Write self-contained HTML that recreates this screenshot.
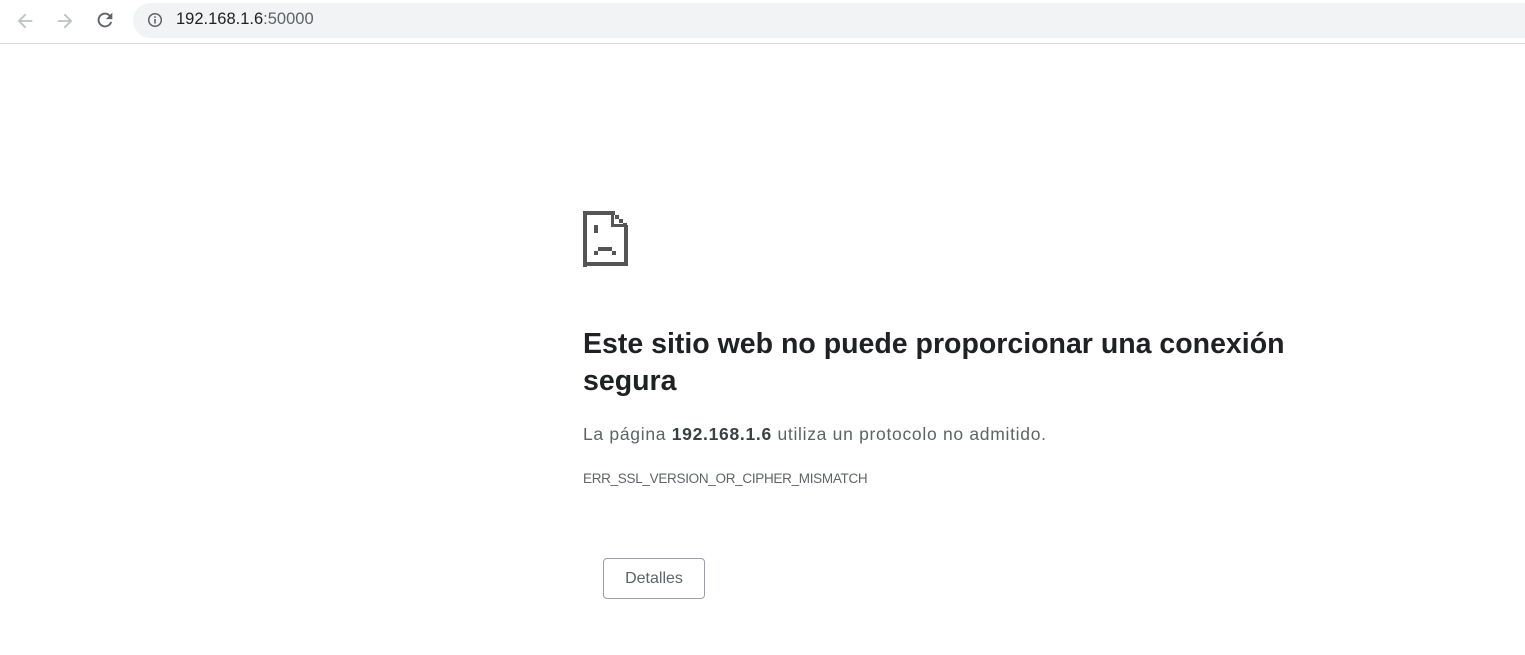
<!DOCTYPE html>
<html><head><meta charset="utf-8"><style>
html,body{margin:0;padding:0;background:#fff;width:1525px;height:655px;overflow:hidden;font-family:"Liberation Sans",sans-serif}
.bar{position:absolute;left:0;top:0;width:1525px;height:43px;border-bottom:1px solid #dadce0;background:#fff}
.omni{position:absolute;left:133px;top:3px;width:1420px;height:35px;border-radius:18px;background:#f1f3f4}
.url{position:absolute;left:176px;top:10px;font-size:16.5px;color:#202124;letter-spacing:0}
.url span{color:#5f6368}
h1{position:absolute;left:583px;top:326px;margin:0;font-size:28.5px;font-weight:bold;color:#202124;line-height:37px;width:740px;letter-spacing:0}
.p{position:absolute;left:583px;top:424px;font-size:17.5px;color:#5f6368;letter-spacing:0.7px}
.p b{color:#3c4043}
.code{position:absolute;left:583px;top:471px;font-size:13.5px;color:#5f6368;letter-spacing:-0.3px}
.btn{position:absolute;left:603px;top:558px;width:100px;height:39px;border:1px solid #9aa0a6;border-radius:4px;box-sizing:content-box;font-size:16px;color:#5f6368;text-align:center;line-height:39px}
</style></head><body>
<div class="bar">
<svg style="position:absolute;left:14px;top:10px" width="22" height="22" viewBox="0 0 24 24"><path d="M20 11H7.8l5.6-5.6L12 4l-8 8 8 8 1.4-1.4L7.8 13H20z" fill="#bdc1c6"/></svg>
<svg style="position:absolute;left:54px;top:10px" width="22" height="22" viewBox="0 0 24 24"><path d="M4 11h12.2l-5.6-5.6L12 4l8 8-8 8-1.4-1.4 5.6-5.6H4z" fill="#bdc1c6"/></svg>
<svg style="position:absolute;left:94px;top:9px" width="22" height="22" viewBox="0 0 24 24"><path d="M17.65 6.35A7.96 7.96 0 0 0 12 4a8 8 0 1 0 7.730 10h-2.08A6 6 0 1 1 12 6c1.66 0 3.14.69 4.22 1.78L13 11h7V4l-2.35 2.35z" fill="#5f6368"/></svg>
<div class="omni"></div>
<svg style="position:absolute;left:147px;top:12px" width="16" height="16" viewBox="0 0 16 16"><circle cx="8" cy="8" r="6.3" fill="none" stroke="#5f6368" stroke-width="1.5"/><rect x="7.2" y="7" width="1.6" height="4.5" fill="#5f6368"/><rect x="7.2" y="4.3" width="1.6" height="1.6" fill="#5f6368"/></svg>
<div class="url">192.168.1.6<span>:50000</span></div>
</div>
<svg style="position:absolute;left:583px;top:211px" width="46" height="56" viewBox="0 0 46 56" fill="#555">
<rect x="0" y="0" width="4" height="56"/><rect x="0" y="0" width="32" height="4"/><rect x="0" y="51" width="45" height="4"/><rect x="41" y="14" width="4" height="41"/>
<rect x="32" y="4" width="4" height="4"/><rect x="36" y="8" width="4" height="4"/><rect x="40" y="12" width="4" height="3"/>
<rect x="28" y="4" width="3" height="12"/><rect x="28" y="13" width="15" height="3"/>
<rect x="11" y="14" width="4" height="8"/>
<rect x="11" y="40" width="4" height="4"/><rect x="15" y="36" width="14" height="4"/><rect x="29" y="40" width="4" height="4"/>
</svg>
<h1>Este sitio web no puede proporcionar una conexión segura</h1>
<div class="p">La página <b>192.168.1.6</b> utiliza un protocolo no admitido.</div>
<div class="code">ERR_SSL_VERSION_OR_CIPHER_MISMATCH</div>
<div class="btn">Detalles</div>
</body></html>
